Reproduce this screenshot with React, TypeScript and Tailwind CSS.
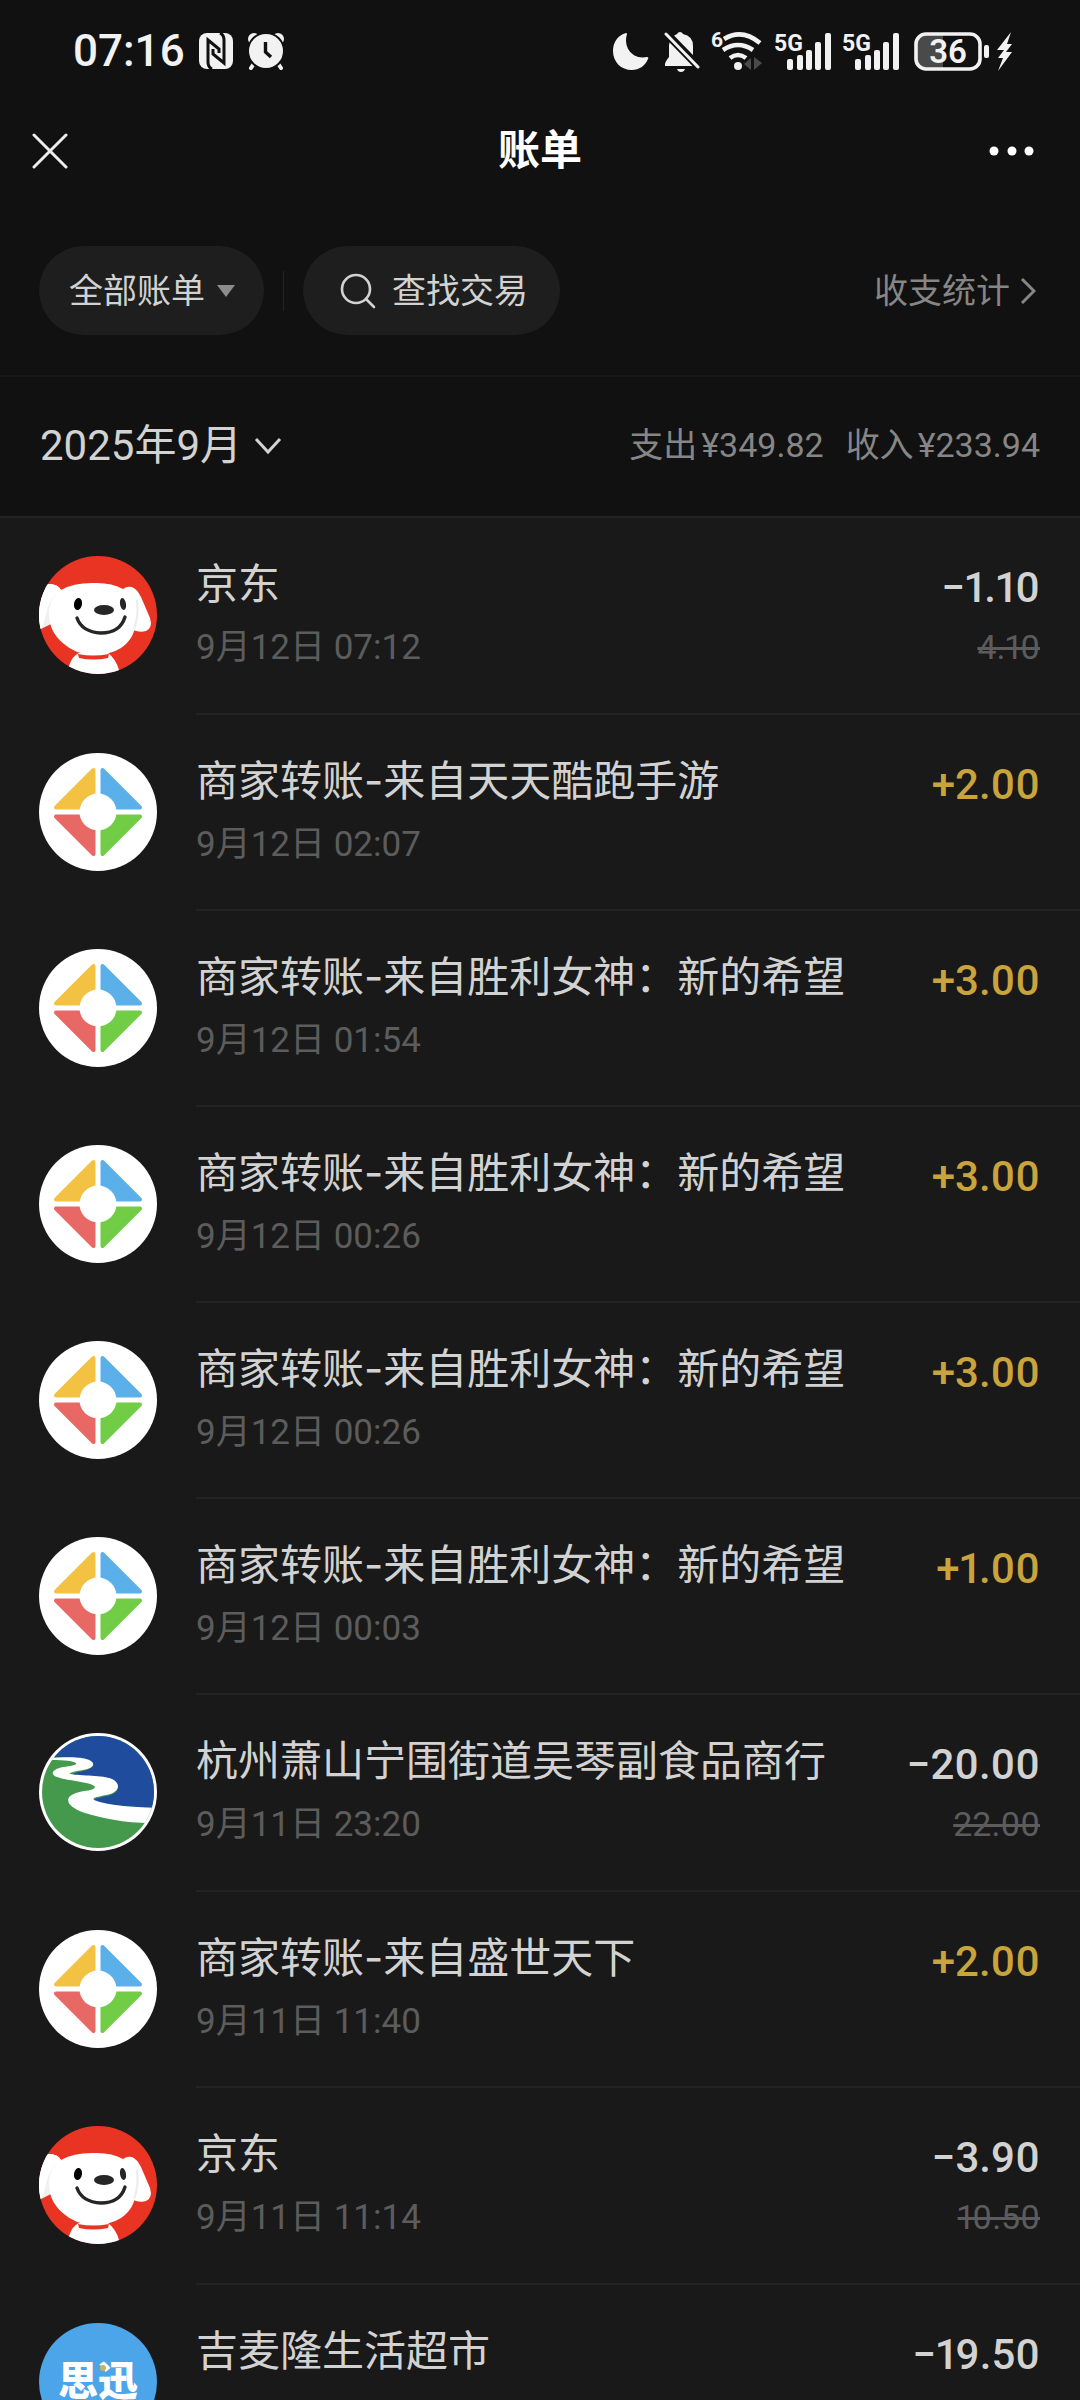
import React from 'react';

type Brand = 'jd' | 'tencent' | 'river' | 'siss';

interface Bill {
  brand: Brand;
  name: string;
  time: string;
  amount: string;
  original?: string;
}

const bills: Bill[] = [
  { brand: 'jd', name: '京东', time: '9月12日 07:12', amount: '−1.10', original: '4.10' },
  { brand: 'tencent', name: '商家转账-来自天天酷跑手游', time: '9月12日 02:07', amount: '+2.00' },
  { brand: 'tencent', name: '商家转账-来自胜利女神：新的希望', time: '9月12日 01:54', amount: '+3.00' },
  { brand: 'tencent', name: '商家转账-来自胜利女神：新的希望', time: '9月12日 00:26', amount: '+3.00' },
  { brand: 'tencent', name: '商家转账-来自胜利女神：新的希望', time: '9月12日 00:26', amount: '+3.00' },
  { brand: 'tencent', name: '商家转账-来自胜利女神：新的希望', time: '9月12日 00:03', amount: '+1.00' },
  { brand: 'river', name: '杭州萧山宁围街道吴琴副食品商行', time: '9月11日 23:20', amount: '−20.00', original: '22.00' },
  { brand: 'tencent', name: '商家转账-来自盛世天下', time: '9月11日 11:40', amount: '+2.00' },
  { brand: 'jd', name: '京东', time: '9月11日 11:14', amount: '−3.90', original: '10.50' },
  { brand: 'siss', name: '吉麦隆生活超市', time: '', amount: '−19.50' },
];

function JdLogo() {
  return (
    <svg viewBox="0 0 118 118" className="size-full" aria-hidden="true">
      <rect width="118" height="118" fill="#e93323" />
      <path d="M0 30 L10 28 Q19 28 22 34 L16 66 L0 74 Z" fill="#f0f0f0" />
      <path d="M0 30 L10 28 Q19 28 22 34 Q12 40 8 54 L4 70 L0 74 Z" fill="#ffffff" />
      <path d="M84 33 Q88 30 93 31 Q98 33 102 41 L111 62 Q114 72 107 75 Q101 77 94 74 Z" fill="#ffffff" />
      <path d="M22 34 Q34 27 53 27 Q72 26 84 33 Q97 44 97 62 Q97 82 82 92 Q71 99 54 99 Q36 98 25 88 Q10 76 10 58 Q10 42 22 34 Z" fill="#ffffff" />
      <path d="M98 44 Q100 60 95 73" stroke="#ececec" strokeWidth="2" fill="none" />
      <path d="M30 110 Q33 100 40 97 L69 97 Q77 103 80 114 L80 118 L24 118 Z" fill="#ffffff" />
      <path d="M39 98 Q54 101 70 98 L69 102 Q54 105 40 102 Z" fill="#e93323" />
      <ellipse cx="39" cy="48" rx="4" ry="6" fill="#000" transform="rotate(10 39 48)" />
      <ellipse cx="84" cy="48" rx="3" ry="6" fill="#262626" transform="rotate(-10 84 48)" />
      <ellipse cx="65" cy="54" rx="10" ry="5" fill="#262626" />
      <path d="M38 62 Q43 76 62 77 Q81 77 86 61" stroke="#262626" strokeWidth="3.4" strokeLinecap="round" fill="none" />
    </svg>
  );
}

function TencentLogo() {
  return (
    <svg viewBox="0 0 118 118" className="size-full" aria-hidden="true">
      <rect width="118" height="118" fill="#ffffff" />
      <g strokeWidth="4" strokeLinejoin="round">
        <path d="M54.500 17 V54.500 H17 Z" fill="#f3c243" stroke="#f3c243" />
        <path d="M63.500 17 V54.500 H101 Z" fill="#5cb0ea" stroke="#5cb0ea" />
        <path d="M54.500 101 V63.500 H17 Z" fill="#e86866" stroke="#e86866" />
        <path d="M63.500 101 V63.500 H101 Z" fill="#70cd45" stroke="#70cd45" />
      </g>
      <circle cx="59" cy="59" r="18.500" fill="#ffffff" />
    </svg>
  );
}

function RiverLogo() {
  return (
    <svg viewBox="0 0 118 118" className="size-full" aria-hidden="true">
      <defs>
        <clipPath id="river-disc">
          <circle cx="59" cy="59" r="56" />
        </clipPath>
      </defs>
      <rect width="118" height="118" fill="#ffffff" />
      <g clipPath="url(#river-disc)">
        <rect width="118" height="118" fill="#45994c" />
        <path
          d="M0 25 C20 24 38 24 47 26 C58 29 55 36 44 38 C38 39 33 41 34 42 C45 43 65 43 74 47 C83 52 80 61 68 63 C58 65 54 66 56 68 C70 73 95 74 118 75 V0 H0 Z"
          fill="#1f4c9d"
        />
        <path
          d="M10 25 C24 24 40 24 47 26 C58 29 56 35 44 37 C36 38 30 40 31 41 C42 43 64 42 73 46 C83 51 80 60 67 62 C57 64 53 65 55 67 C70 73 95 74 118 75 V90 C90 91 62 85 46 80 C26 73 25 64 37 60 C46 57 55 58 56 54 C54 49 28 48 18 44 C10 41 14 36 24 34 C32 33 38 32 37 30 C32 27 20 27 10 27 Z"
          fill="#ffffff"
        />
      </g>
    </svg>
  );
}

function SissLogo() {
  return (
    <span className="relative flex size-full items-center justify-center bg-[#4ba5e8] text-[40px] leading-none font-black text-white">
      思迅
      <span className="absolute top-[42px] left-[61px] size-[6px] rounded-sm bg-[#c9b35c]" />
    </span>
  );
}

function BrandLogo({ brand }: { brand: Brand }) {
  if (brand === 'jd') return <JdLogo />;
  if (brand === 'tencent') return <TencentLogo />;
  if (brand === 'river') return <RiverLogo />;
  return <SissLogo />;
}

function NfcIcon() {
  return (
    <svg viewBox="0 0 34 36" className="h-9 w-[34px]" aria-hidden="true">
      <rect width="34" height="36" rx="8" fill="#f2f2f2" />
      <path d="M13 36 Q9 34 9 29 V7 L20 16 V20" fill="none" stroke="#111111" strokeWidth="3" />
      <path d="M21 0 Q25 2 25 7 V30 L14 21 V16" fill="none" stroke="#111111" strokeWidth="3" />
    </svg>
  );
}

function AlarmIcon() {
  return (
    <svg viewBox="0 0 38 38" className="size-[38px]" aria-hidden="true">
      <path d="M8 30 L4 36 M30 30 L34 36" stroke="#f2f2f2" strokeWidth="4" strokeLinecap="round" />
      <circle cx="7" cy="7" r="6" fill="#f2f2f2" />
      <circle cx="31" cy="7" r="6" fill="#f2f2f2" />
      <circle cx="19" cy="19" r="18" fill="#f2f2f2" stroke="#111111" strokeWidth="2" />
      <path d="M18.500 10 V20 L24 25" stroke="#111111" strokeWidth="3.400" fill="none" />
    </svg>
  );
}

function MoonIcon() {
  return (
    <svg viewBox="0 0 36 37" className="h-[37px] w-9" aria-hidden="true">
      <path d="M13 0 Q14 0 14 1 C10 14 19 27 34 24 Q36 24 35 26 C32 33 26 37 19 37 C8 37 0 29 0 18 C0 9 5 2 13 0 Z" fill="#f2f2f2" />
    </svg>
  );
}

function MutedBellIcon() {
  return (
    <svg viewBox="0 0 36 42" className="h-[42px] w-9" aria-hidden="true">
      <path d="M13 4 Q14 2 16 2 Q18 2 19 4 Q29 6 29 16 V27 L33 33 Q34 36 30 36 H1 Q0 33 5 27 V15 Q6 7 13 4 Z" fill="#f2f2f2" />
      <path d="M13 39 H21 Q20 42 17 42 Q14 42 13 39 Z" fill="#f2f2f2" />
      <path d="M2 3 L35 37" stroke="#111111" strokeWidth="8" />
      <path d="M2 4 L34 37" stroke="#f2f2f2" strokeWidth="3" strokeLinecap="round" />
    </svg>
  );
}

function WifiIcon() {
  return (
    <svg viewBox="0 0 52 42" className="h-[42px] w-[52px] overflow-visible" aria-hidden="true">
      <text x="0" y="17" fill="#f2f2f2" fontFamily="Roboto" fontWeight="700" fontSize="21">6</text>
      <g fill="none" stroke="#f2f2f2" strokeWidth="4.600">
        <path d="M13 9 Q31 -2 49 13" />
        <path d="M12 20 Q27 10 42 20" />
        <path d="M19 28 Q27 22 35 28" />
      </g>
      <circle cx="27" cy="36" r="4" fill="#f2f2f2" />
      <path d="M33 34 L40 28 V40 Z M43 27 L51 33 L43 40 Z" fill="#4a4a4a" />
    </svg>
  );
}

function SignalIcon() {
  return (
    <svg viewBox="0 0 57 42" className="h-[42px] w-[57px] overflow-visible" aria-hidden="true">
      <text x="0" y="21" fill="#f2f2f2" fontFamily="Roboto" fontWeight="700" fontSize="23">5G</text>
      <g fill="#f2f2f2">
        <rect x="13" y="29" width="6" height="11" rx="2" />
        <rect x="23" y="25" width="6" height="15" rx="2" />
        <rect x="32" y="20" width="6" height="20" rx="2" />
        <rect x="41" y="12" width="6" height="28" rx="2" />
        <rect x="51" y="3" width="6" height="37" rx="2" />
      </g>
    </svg>
  );
}

function BatteryIcon() {
  return (
    <svg viewBox="0 0 99 42" className="h-[42px] w-[99px]" aria-hidden="true">
      <path d="M12 4 H29 V38 H12 Q3 38 3 29 V13 Q3 4 12 4 Z" fill="#4a4a4a" />
      <rect x="2" y="4" width="64" height="35" rx="10" fill="none" stroke="#f2f2f2" strokeWidth="3.600" />
      <rect x="70" y="15" width="5" height="13" rx="2" fill="#f2f2f2" />
      <text x="34" y="33" textAnchor="middle" fill="#f2f2f2" fontFamily="Roboto" fontWeight="600" fontSize="33">36</text>
      <path d="M97 2 L83 20 H90 L84 28 H89 L84 41 L98 22 H92 L98 14 H93 Z" fill="#f2f2f2" />
    </svg>
  );
}

function StatusBar() {
  return (
    <div className="flex items-center justify-between pt-[22px] pr-[67px] pl-[73px] text-[#f2f2f2]">
      <div className="flex items-center">
        <span className="text-[44px] leading-[58px] font-medium">07:16</span>
        <span className="ml-[14px]"><NfcIcon /></span>
        <span className="ml-[14px]"><AlarmIcon /></span>
      </div>
      <div className="flex items-center gap-[11px]">
        <span className="mr-1"><MoonIcon /></span>
        <MutedBellIcon />
        <WifiIcon />
        <SignalIcon />
        <SignalIcon />
        <span className="ml-1"><BatteryIcon /></span>
      </div>
    </div>
  );
}

function TitleBar() {
  return (
    <header className="flex items-center justify-between pt-[42px] pr-11 pb-[26px] pl-8">
      <button type="button" aria-label="关闭" className="flex w-[60px]">
        <svg viewBox="0 0 36 36" className="size-9" fill="none" stroke="#ededed" strokeWidth="3" strokeLinecap="round" aria-hidden="true">
          <path d="M2 2 L34 34 M34 2 L2 34" />
        </svg>
      </button>
      <h1 className="text-[42px] leading-[58px] font-bold text-white">账单</h1>
      <button type="button" aria-label="更多" className="flex w-12 justify-end">
        <svg viewBox="0 0 48 12" className="h-3 w-12" fill="#ffffff" aria-hidden="true">
          <circle cx="6" cy="6" r="4.500" />
          <circle cx="24" cy="6" r="4.500" />
          <circle cx="41" cy="6" r="4.500" />
        </svg>
      </button>
    </header>
  );
}

function FilterBar() {
  return (
    <nav className="flex items-center border-b-2 border-[#191919] py-10 pr-11 pl-[39px] text-[34px] leading-[50px] text-[#d2d2d2]">
      <button type="button" className="flex h-[89px] items-center gap-3 rounded-full bg-[#1e1e1e] pr-[29px] pl-[30px]">
        全部账单
        <svg viewBox="0 0 18 12" className="h-3 w-[18px]" fill="#8c8c8c" aria-hidden="true">
          <path d="M0 0 H18 L9 12 Z" />
        </svg>
      </button>
      <span className="mx-[19px] h-10 w-px bg-[#242424]" />
      <button type="button" className="flex h-[89px] items-center gap-4 rounded-full bg-[#1e1e1e] pr-8 pl-[37px]">
        <svg viewBox="0 0 36 36" className="size-9" fill="none" stroke="#d2d2d2" strokeWidth="2.600" strokeLinecap="round" aria-hidden="true">
          <circle cx="16" cy="16" r="14" />
          <path d="M26 26 L34 34" />
        </svg>
        查找交易
      </button>
      <a href="#stats" className="ml-auto flex items-center gap-[10px] text-[#868686]">
        收支统计
        <svg viewBox="0 0 16 28" className="h-7 w-4" fill="none" stroke="#868686" strokeWidth="3" aria-hidden="true">
          <path d="M2 2 L14 14 L2 26" />
        </svg>
      </a>
    </nav>
  );
}

function MonthBar() {
  return (
    <section className="flex items-center justify-between border-b-2 border-[#232323] pt-[38px] pr-10 pb-10 pl-10">
      <button type="button" className="flex items-center gap-3 text-[42px] leading-[61px] text-[#d2d2d2]">
        2025年9月
        <svg viewBox="0 0 28 18" className="h-[18px] w-7" fill="none" stroke="#d2d2d2" strokeWidth="3" aria-hidden="true">
          <path d="M2 2 L14 15 L26 2" />
        </svg>
      </button>
      <p className="flex gap-[22px] text-[34px] leading-[61px] text-[#868686]">
        <span className="flex gap-1">
          <span>支出</span>
          <span>¥349.82</span>
        </span>
        <span className="flex gap-1">
          <span>收入</span>
          <span>¥233.94</span>
        </span>
      </p>
    </section>
  );
}

function BillRow({ bill }: { bill: Bill }) {
  const income = bill.amount.startsWith('+');
  return (
    <li className="flex pl-[39px]">
      <div className="mt-[38px] size-[118px] shrink-0 overflow-hidden rounded-full">
        <BrandLogo brand={bill.brand} />
      </div>
      <div
        className={`ml-[39px] flex flex-1 justify-between border-b-2 border-[#232323] pt-9 pr-10 ${
          bill.original ? 'h-[197px]' : 'h-[196px]'
        }`}
      >
        <div>
          <p className="font-['Inter','Noto_Sans_CJK_SC',sans-serif] text-[42px] leading-[60px] text-[#d2d2d2]">{bill.name}</p>
          <p className="mt-[9px] text-[35px] leading-[50px] text-[#5c5c5c]">{bill.time}</p>
        </div>
        <div className="text-right proportional-nums">
          <p className={`text-[42px] leading-[68px] font-medium ${income ? 'text-[#c9a33c]' : 'text-[#d2d2d2]'}`}>{bill.amount}</p>
          {bill.original && <s className="block text-[34px] leading-[50px] text-[#5c5c5c]">{bill.original}</s>}
        </div>
      </div>
    </li>
  );
}

export default function App() {
  return (
    <main className="h-screen overflow-hidden bg-[#111111] font-['Roboto','Noto_Sans_CJK_SC',sans-serif]">
      <StatusBar />
      <TitleBar />
      <FilterBar />
      <MonthBar />
      <ul className="bg-[#191919]">
        {bills.map((bill, index) => (
          <BillRow key={index} bill={bill} />
        ))}
      </ul>
    </main>
  );
}
